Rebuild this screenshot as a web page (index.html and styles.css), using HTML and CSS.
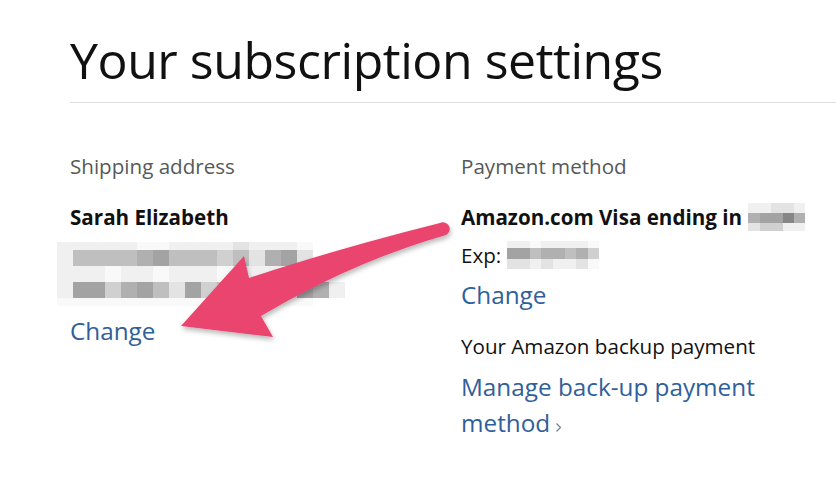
FILE: index.html
```html
<!DOCTYPE html>
<html lang="en">
<head>
    <meta charset="UTF-8">
    <meta name="viewport" content="width=device-width, initial-scale=1.0">
    <title>Your subscription settings</title>
    <link rel="stylesheet" href="styles.css">
</head>
<body>

    <div class="page">
        <h1 class="title">Your subscription settings</h1>

        <div class="settings">
            <div class="col">
                <div class="label">Shipping address</div>
                <div class="strong">Sarah Elizabeth</div>

                <!-- blurred address -->
                <div class="blur blur-address">
                    <div class="row r8">
                        <i class="c1"></i><i class="c1"></i><i class="c1"></i><i class="c1"></i><i class="c1"></i><i class="c0"></i><i class="c0"></i><i class="c1"></i><i class="c1"></i><i class="c1"></i><i class="c1"></i><i class="c2"></i><i class="c1"></i><i class="c1"></i><i class="c1"></i><i class="c0"></i>
                    </div>
                    <div class="row r16">
                        <i class="c1"></i><i class="c4"></i><i class="c4"></i><i class="c4"></i><i class="c4"></i><i class="c5"></i><i class="c6"></i><i class="c4"></i><i class="c4"></i><i class="c4"></i><i class="c3"></i><i class="c4"></i><i class="c2"></i><i class="c5"></i><i class="c6"></i><i class="c2"></i>
                    </div>
                    <div class="row r16">
                        <i class="c1"></i><i class="c1"></i><i class="c1"></i><i class="c0"></i><i class="c1"></i><i class="c1"></i><i class="c0"></i><i class="c1"></i><i class="c1"></i><i class="c1"></i><i class="c0"></i><i class="c1"></i><i class="c1"></i><i class="c1"></i><i class="c1"></i><i class="c1"></i><i class="c0"></i>
                    </div>
                    <div class="row r16">
                        <i class="c1"></i><i class="c6"></i><i class="c6"></i><i class="c3"></i><i class="c5"></i><i class="c6"></i><i class="c4"></i><i class="c2"></i><i class="c6"></i><i class="c3"></i><i class="c4"></i><i class="c5"></i><i class="c4"></i><i class="c3"></i><i class="c2"></i><i class="c6"></i><i class="c5"></i><i class="c1"></i>
                    </div>
                    <div class="row r8">
                        <i class="c0"></i><i class="c0"></i><i class="c0"></i><i class="c0"></i><i class="c0"></i><i class="c0"></i><i class="c0"></i><i class="c0"></i><i class="c0"></i><i class="c0"></i><i class="c0"></i><i class="c0"></i><i class="c0"></i><i class="c0"></i><i class="c0"></i><i class="c0"></i>
                    </div>
                </div>

                <a href="#" class="link link-change-left">Change</a>
            </div>

            <div class="col">
                <div class="label">Payment method</div>
                <div class="strong">Amazon.com Visa ending in
                    <span class="blur blur-card">
                        <span class="row r10"><i class="c1"></i><i class="c1"></i><i class="c2"></i><i class="c2"></i><i class="c1"></i></span>
                        <span class="row r10"><i class="c5"></i><i class="c6"></i><i class="c6"></i><i class="c7"></i><i class="c5"></i></span>
                        <span class="row r8"><i class="c2"></i><i class="c3"></i><i class="c3"></i><i class="c1"></i><i class="c1"></i></span>
                    </span>
                </div>
                <div class="text text-exp">Exp:
                    <span class="blur blur-exp">
                        <span class="row r7"><i class="c1"></i><i class="c1"></i><i class="c0"></i><i class="c1"></i><i class="c1"></i><i class="c1"></i><i class="c1"></i><i class="c0"></i></span>
                        <span class="row r11"><i class="c6"></i><i class="c6"></i><i class="c4"></i><i class="c5"></i><i class="c5"></i><i class="c4"></i><i class="c5"></i><i class="c3"></i></span>
                        <span class="row r10"><i class="c2"></i><i class="c2"></i><i class="c1"></i><i class="c2"></i><i class="c1"></i><i class="c1"></i><i class="c2"></i><i class="c0"></i></span>
                    </span>
                </div>
                <a href="#" class="link link-change-right">Change</a>

                <div class="text text-backup">Your Amazon backup payment</div>
                <a href="#" class="link link-manage">Manage back-up payment method<svg class="chevron" width="7" height="11" viewBox="0 0 7 11"><path d="M1.5 1.5 L5.5 5.5 L1.5 9.5" fill="none" stroke="#6d819c" stroke-width="1.2"/></svg></a>
            </div>
        </div>
    </div>

    <!-- annotation arrow drawn over the screenshot -->
    <svg class="arrow" width="836" height="480" viewBox="0 0 836 480">
        <defs>
            <filter id="shadow" x="-10%" y="-10%" width="130%" height="130%">
                <feDropShadow dx="1" dy="3" stdDeviation="2.5" flood-color="#000" flood-opacity="0.28"/>
            </filter>
        </defs>
        <path filter="url(#shadow)" fill="#e9446e"
              d="M440 223 Q 340 248 249 278 L 244 256 L 181 326 L 273 337 L 261 316 Q 352 262 446 235 A 6 6 0 0 0 440 223 Z"/>
    </svg>

</body>
</html>
```

FILE: styles.css
```css
body {
    margin: 0;
    font-family: "Open Sans", "Noto Sans", sans-serif;
    color: #111;
    background: #fff;
}
.page {
    padding-left: 70px;
}
.title {
    margin: 0;
    padding-top: 27px;
    padding-bottom: 9px;
    font-size: 50px;
    font-weight: 400;
    line-height: 66px;
    letter-spacing: -0.45px;
    border-bottom: 1px solid #dcdfe0;
}
.settings {
    display: grid;
    grid-template-columns: 391px 1fr;
    padding-top: 49px;
}
.col {
    display: flex;
    flex-direction: column;
    align-items: flex-start;
}
.label {
    font-size: 20.6px;
    line-height: 28px;
    color: #565959;
}
.strong {
    margin-top: 23px;
    height: 28px;
    font-size: 20.6px;
    line-height: 28px;
    font-weight: 700;
    white-space: nowrap;
}
.text {
    height: 28px;
    font-size: 20.6px;
    line-height: 28px;
    white-space: nowrap;
}
.text-exp {
    margin-top: 10px;
}
.text-backup {
    margin-top: 19px;
}
.link {
    font-size: 24.3px;
    line-height: 36px;
    color: #30609a;
    text-decoration: none;
}
.link-change-left {
    margin-top: 7px;
}
.link-change-right {
    margin-top: 8px;
}
.link-manage {
    margin-top: 9px;
    width: 310px;
}
.chevron {
    margin-left: 5px;
    vertical-align: -1px;
}

/* pixelated (redacted) blocks */
.blur {
    display: flex;
    flex-direction: column;
}
.blur .row {
    display: flex;
}
.blur i {
    display: block;
    flex: none;
}
.blur-address {
    margin-top: 11px;
    margin-left: -13px;
}
.blur-address i {
    width: 16px;
}
.blur-card,
.blur-exp {
    display: inline-flex;
    vertical-align: top;
}
.blur-card {
    margin-left: 1px;
}
.blur-card i {
    width: 11.4px;
}
.blur-exp i {
    width: 11.6px;
}
.r7 { height: 7px; }
.r8 { height: 8px; }
.r10 { height: 10px; }
.r11 { height: 11px; }
.r16 { height: 16px; }
.r7 i, .r8 i, .r10 i, .r11 i, .r16 i { height: 100%; }

.c0 { background: #f9f9f9; }
.c1 { background: #f0f0f0; }
.c2 { background: #e3e3e3; }
.c3 { background: #d0d0d0; }
.c4 { background: #bfbfbf; }
.c5 { background: #b0b0b0; }
.c6 { background: #a3a3a3; }
.c7 { background: #868686; }

.arrow {
    position: absolute;
    top: 0;
    left: 0;
    pointer-events: none;
}
```
